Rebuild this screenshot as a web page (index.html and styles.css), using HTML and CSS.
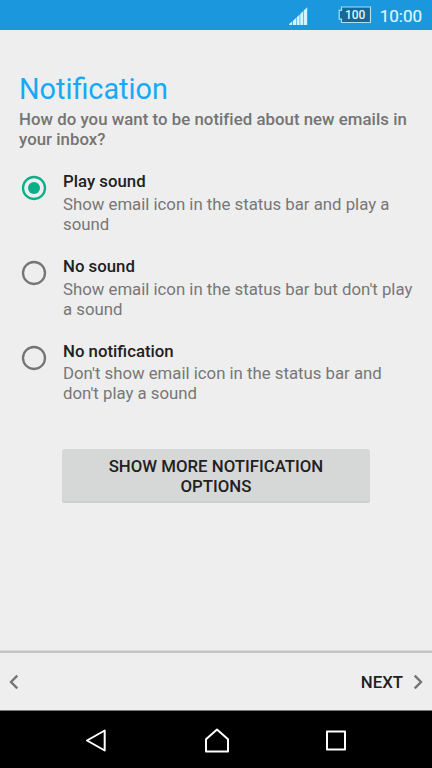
FILE: index.html
```html
<!DOCTYPE html>
<html lang="en">
<head>
<meta charset="utf-8">
<title>Notification</title>
<link rel="stylesheet" href="styles.css">
</head>
<body>
<div class="screen">
  <header class="status-bar">
    <svg class="signal" width="19" height="19" viewBox="0 0 19 19"><path d="M.3 18V17L3 14.6V18ZM3.8 18V14L7 11V18ZM7.6 18V10.5L10.6 7.6V18ZM11.2 18V7L14.2 4.1V18ZM14.8 18V3.5L18.2 .3V18Z"/></svg>
    <div class="battery">
      <svg class="battery-shape" width="34" height="18" viewBox="0 0 34 18"><path d="M3.5 1H32.5V16.5H3.5V13.2H1.2V4.3H3.5Z"/></svg>
      <span class="battery-level">100</span>
    </div>
    <span class="clock">10:00</span>
  </header>
  <main class="content">
    <h1 class="title">Notification</h1>
    <p class="question">How do you want to be notified about new emails in your inbox?</p>
    <div class="options">
      <div class="option">
        <svg class="radio selected" width="26" height="26" viewBox="0 0 26 26"><circle class="ring" cx="13" cy="13" r="11"/><circle class="dot" cx="13" cy="13" r="6"/></svg>
        <div class="option-text"><h2>Play sound</h2><p>Show email icon in the status bar and play a sound</p></div>
      </div>
      <div class="option">
        <svg class="radio" width="26" height="26" viewBox="0 0 26 26"><circle class="ring" cx="13" cy="13" r="11"/></svg>
        <div class="option-text"><h2>No sound</h2><p>Show email icon in the status bar but don't play a sound</p></div>
      </div>
      <div class="option">
        <svg class="radio" width="26" height="26" viewBox="0 0 26 26"><circle class="ring" cx="13" cy="13" r="11"/></svg>
        <div class="option-text"><h2>No notification</h2><p>Don't show email icon in the status bar and don't play a sound</p></div>
      </div>
    </div>
    <button class="more">SHOW MORE NOTIFICATION OPTIONS</button>
  </main>
  <footer class="pager">
    <svg class="chevron" width="10" height="16" viewBox="0 0 10 16"><path d="M8.3 1.7L2 8L8.3 14.3"/></svg>
    <div class="next"><span>NEXT</span><svg class="chevron" width="10" height="16" viewBox="0 0 10 16"><path d="M1.7 1.7L8 8L1.7 14.3"/></svg></div>
  </footer>
  <nav class="nav-bar">
    <svg width="24" height="26" viewBox="0 0 24 26"><path d="M20.7 2.5V22.5L3 12.5Z"/></svg>
    <svg width="26" height="26" viewBox="0 0 26 26"><path d="M13 1.5L24 11.3V23.5H2V11.3Z"/></svg>
    <svg width="22" height="26" viewBox="0 0 22 26"><path d="M2 3.5H20V21.5H2Z"/></svg>
  </nav>
</div>
</body>
</html>
```
FILE: styles.css
```css
* { box-sizing: border-box; }
body, h1, h2, p { margin: 0; }
body {
  font-family: Roboto, sans-serif;
  font-size: 16.8px;
  line-height: 20px;
  background: #eee;
}
.screen {
  width: 432px;
  height: 768px;
  display: flex;
  flex-direction: column;
  overflow: hidden;
}
.status-bar {
  height: 30px;
  flex: none;
  display: flex;
  justify-content: flex-end;
  align-items: flex-start;
  padding-right: 10px;
  background: #1b98dd;
  color: #dff6ff;
}
.signal { margin: 7px 30px 0 0; fill: #d2f6ff; }
.battery { position: relative; width: 34px; height: 18px; margin: 6px 8px 0 0; }
.battery-shape { display: block; fill: #14699a; stroke: #a9e0f5; stroke-width: 1.2; }
.battery-level {
  position: absolute;
  inset: 0 0 0 1px;
  text-align: center;
  font-size: 12px;
  font-weight: 500;
  line-height: 18px;
}
.clock { font-size: 17px; line-height: 32px; font-weight: 400; -webkit-text-stroke: .2px; }
.content { flex: 1; padding: 42px 17px 0 19px; }
.title { font-size: 28.8px; font-weight: 400; line-height: 34px; color: #16a9f5; }
.question { margin-top: 3px; font-weight: 500; letter-spacing: .04px; color: #747474; }
.options { margin-top: 22px; }
.option { display: flex; height: 84.8px; }
.radio { flex: none; margin: 4.3px 16px 0 2px; fill: none; stroke: #757575; stroke-width: 2.3; }
.selected { stroke: #0aae88; }
.dot { fill: #0aae88; stroke: none; }
.option-text { flex: 1; color: #777; }
.option-text h2 { font-size: 16.8px; font-weight: 500; line-height: 20px; color: #212121; margin-bottom: 2.8px; }
.option-text p { letter-spacing: -.01px; }
.more {
  display: block;
  width: 308px;
  height: 54px;
  margin: 23.4px 0 0 43px;
  padding: 0 40px;
  border: 0;
  border-radius: 3px;
  background: #d6d7d7;
  box-shadow: inset 0 -2px #cecfcf;
  font: 500 16.8px/20px Roboto, sans-serif;
  color: #212121;
}
.pager {
  flex: none;
  height: 61px;
  padding: 2px 9px 0;
  display: flex;
  align-items: center;
  justify-content: space-between;
  border-top: 1px solid #dadada;
  border-bottom: 1px solid #777;
  box-shadow: inset 0 2px #c4c4c4;
}
.chevron { fill: none; stroke: #757575; stroke-width: 2.4; }
.next { display: flex; align-items: center; gap: 10px; font-weight: 500; color: #212121; }
.nav-bar {
  flex: none;
  height: 57px;
  display: flex;
  justify-content: space-between;
  padding: 17px 85px 0 84px;
  background: #000;
}
.nav-bar svg { fill: none; stroke: #fff; stroke-width: 2; stroke-linejoin: round; }
```
